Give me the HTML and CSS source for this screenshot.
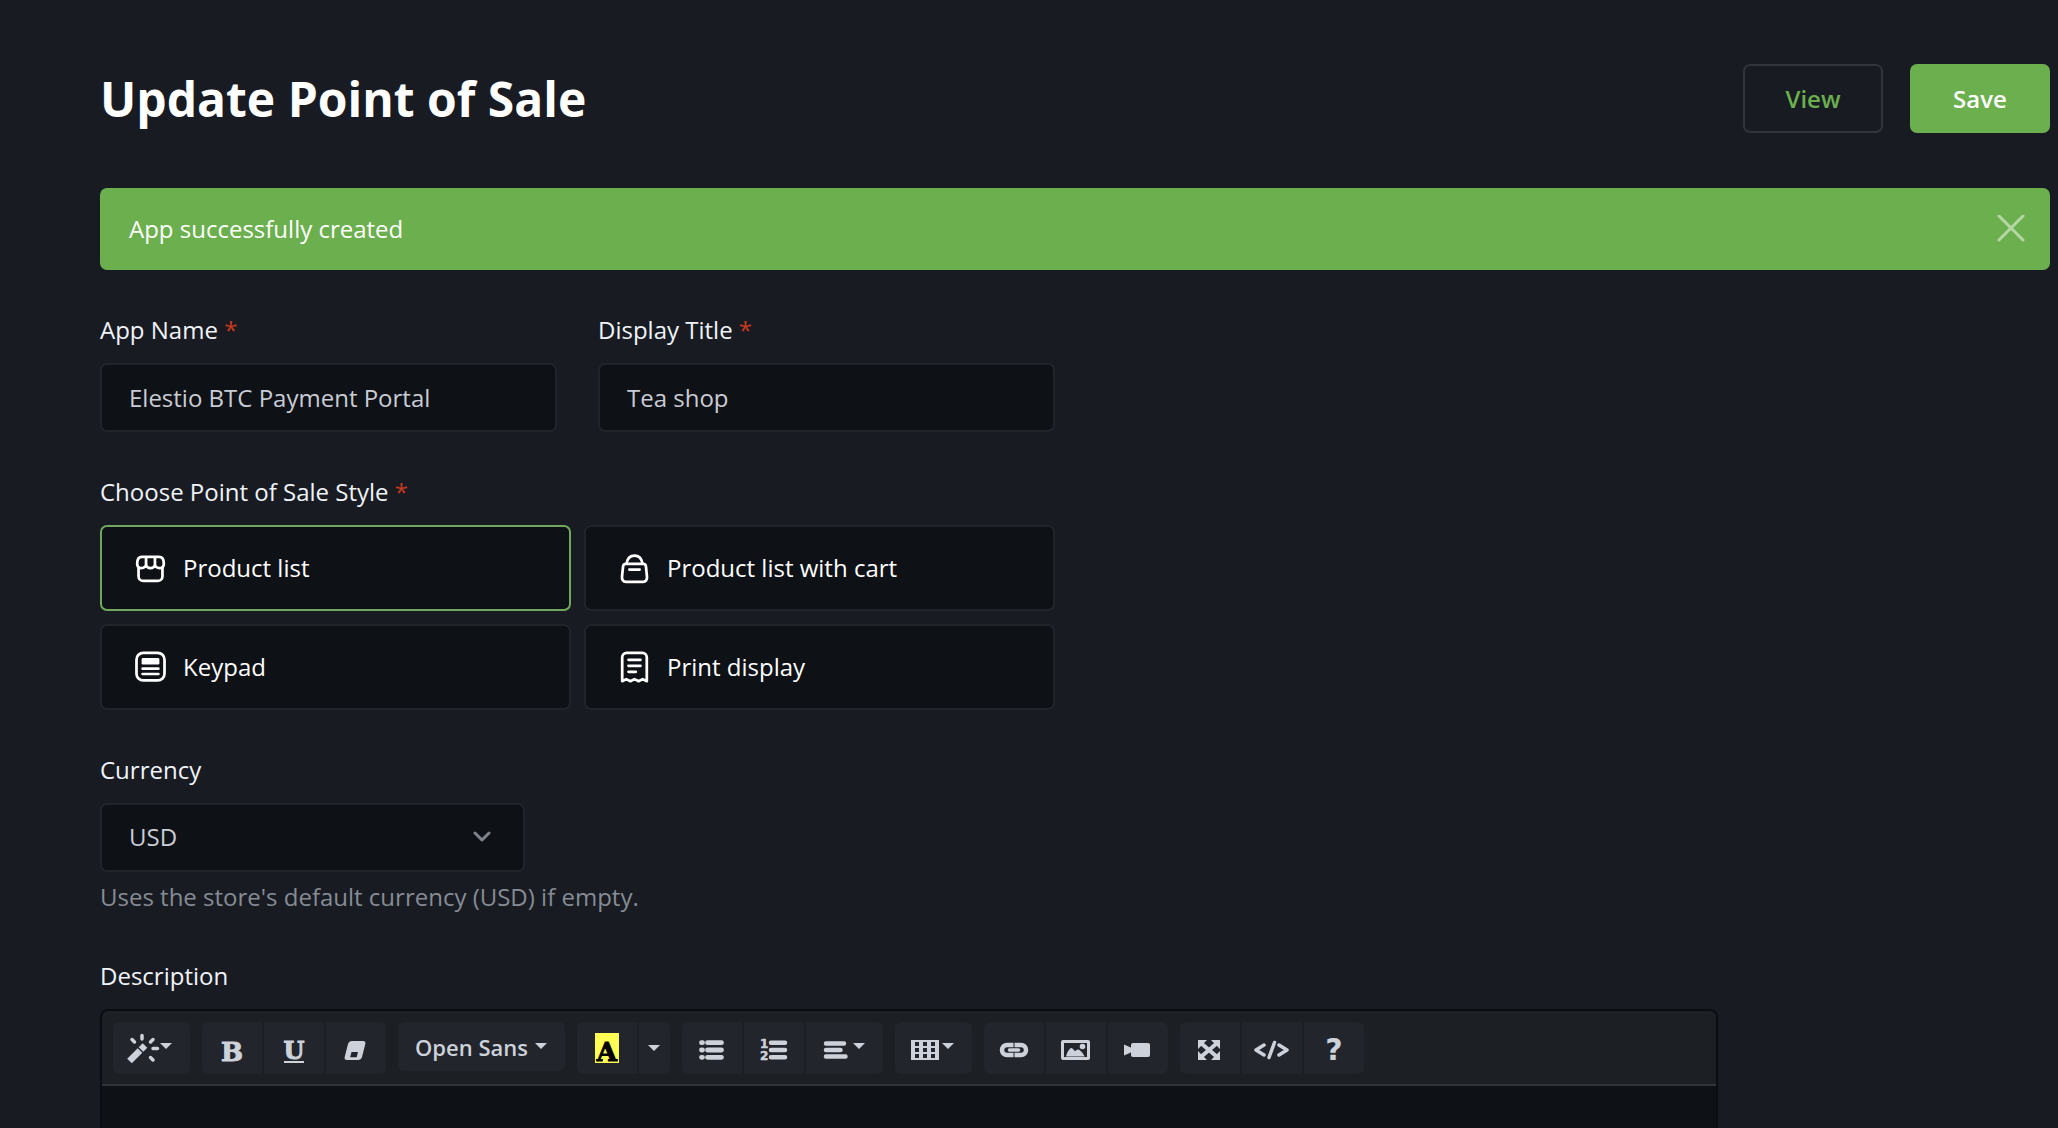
FILE: index.html
```html
<!DOCTYPE html>
<html lang="en">
<head>
    <meta charset="UTF-8">
    <meta name="viewport" content="width=device-width, initial-scale=1.0">
    <title>Update Point of Sale</title>
    <link rel="stylesheet" href="styles.css">
</head>
<body>
    <form class="page">
        <header class="page-header">
            <h1>Update Point of Sale</h1>
            <div class="actions">
                <button type="button" class="btn btn-secondary">View</button>
                <button type="submit" class="btn btn-primary">Save</button>
            </div>
        </header>

        <div class="alert" role="alert">
            <span>App successfully created</span>
            <button type="button" class="alert-close" aria-label="Close">
                <svg viewBox="0 0 28 28"><path d="M2 1l24 24M26 1L2 25"/></svg>
            </button>
        </div>

        <div class="settings">
            <div class="row">
                <div class="field">
                    <label for="app-name">App Name <span class="required">*</span></label>
                    <input type="text" id="app-name" class="control" value="Elestio BTC Payment Portal">
                </div>
                <div class="field">
                    <label for="title">Display Title <span class="required">*</span></label>
                    <input type="text" id="title" class="control" value="Tea shop">
                </div>
            </div>

            <fieldset>
                <legend>Choose Point of Sale Style <span class="required">*</span></legend>
                <div class="tiles">
                    <label class="tile">
                        <input type="radio" name="style" value="static" checked>
                        <svg viewBox="0 0 24 24">
                            <path d="M7 5.2h10c2 0 2.8 2 2.8 4 0 1.7-1 2.6-2.5 2.6s-2.7-1-2.7-2.4c0 1.4-1.1 2.4-2.6 2.4s-2.6-1-2.6-2.4c0 1.4-1.2 2.4-2.7 2.4s-2.5-.9-2.5-2.6c0-2 .8-4 2.8-4zM9.4 9.4V5.2M14.6 9.4V5.2"/>
                            <path d="M5 11.3v5.2a2.8 2.8 0 0 0 2.8 2.8h8.4a2.8 2.8 0 0 0 2.8-2.8v-5.2"/>
                        </svg>
                        <span>Product list</span>
                    </label>
                    <label class="tile">
                        <input type="radio" name="style" value="cart">
                        <svg viewBox="0 0 24 24">
                            <path d="M7 9.3h10c.9 0 1.6.6 1.7 1.5l.6 6c.2 1.7-.7 3-2.3 3H7c-1.6 0-2.5-1.3-2.3-3l.6-6c.1-.9.8-1.5 1.7-1.5z"/>
                            <path d="M7.3 9.2c.5-3 2.4-4.7 4.7-4.7s4.2 1.7 4.7 4.7M9 12.6h6"/>
                        </svg>
                        <span>Product list with cart</span>
                    </label>
                    <label class="tile">
                        <input type="radio" name="style" value="light">
                        <svg viewBox="0 0 24 24">
                            <rect x="3.8" y="3.4" width="16.4" height="16.2" rx="4"/>
                            <rect class="solid" x="6.8" y="6.5" width="10.4" height="3.8" rx=".8"/>
                            <path d="M7.4 12.7h9.2M7.4 15.8h9.2"/>
                        </svg>
                        <span>Keypad</span>
                    </label>
                    <label class="tile">
                        <input type="radio" name="style" value="print">
                        <svg viewBox="0 0 24 24">
                            <path d="M4.8 20V6a2.6 2.6 0 0 1 2.6-2.6h9.2A2.6 2.6 0 0 1 19.2 6v14l-2.4-1.2-2.4 1.2-2.4-1.2L9.600 20l-2.400-1.200z"/>
                            <path d="M8.5 7.5h7M8.5 11h7M8.5 14.5h4.3"/>
                        </svg>
                        <span>Print display</span>
                    </label>
                </div>
            </fieldset>

            <div class="field">
                <label for="currency">Currency</label>
                <div class="select">
                    <select id="currency" class="control">
                        <option>USD</option>
                        <option>EUR</option>
                        <option>BTC</option>
                    </select>
                    <svg viewBox="0 0 18 12"><path d="M2 2l7 7 7-7"/></svg>
                </div>
                <p class="help">Uses the store's default currency (USD) if empty.</p>
            </div>
        </div>

        <section class="description">
            <div class="label" id="description-label">Description</div>
            <div class="editor">
                <div class="toolbar">
                    <div class="group">
                        <button type="button" class="tool dropdown" aria-label="Style">
                            <svg viewBox="0 0 32 32">
                                <path d="M2.500 27L13 16.500" stroke-width="6.500" stroke-linecap="butt"/>
                                <path d="M14 15.500l4-4" stroke-width="6.500" stroke-linecap="butt"/>
                                <path d="M15 1.500v3.500M5 5.500l2.500 2.500M26 5.500l-2.500 2.500M26 14.500h4.500M23.500 23.500l2.500 2.500" stroke-width="3.500"/>
                            </svg>
                            <span class="caret"></span>
                        </button>
                    </div>
                    <div class="group">
                        <button type="button" class="tool letter" aria-label="Bold">B</button>
                        <button type="button" class="tool letter" aria-label="Underline"><span class="underline">U</span></button>
                        <button type="button" class="tool" aria-label="Remove font style">
                            <svg viewBox="0 0 32 32"><path class="solid" fill-rule="evenodd" d="M12 7h11q3 0 2.300 3l-3.300 13q-1 3-4 3H7q-3 0-2.300-3L8 10q1-3 4-3zM11.500 18l-1.300 5.300h6.500l1.300-5.300z"/></svg>
                        </button>
                    </div>
                    <div class="group">
                        <button type="button" class="tool font-name">Open Sans<span class="caret"></span></button>
                    </div>
                    <div class="group">
                        <button type="button" class="tool letter" aria-label="Recent color"><span class="highlight">A</span></button>
                        <button type="button" class="tool more" aria-label="More colors"><span class="caret"></span></button>
                    </div>
                    <div class="group">
                        <button type="button" class="tool" aria-label="Unordered list">
                            <svg viewBox="0 0 32 32">
                                <path d="M5.500 8.700h1M5.500 16h1M5.500 23.300h1M11.500 8.700h14M11.500 16h14M11.500 23.300h14" stroke-width="4.800"/>
                            </svg>
                        </button>
                        <button type="button" class="tool" aria-label="Ordered list">
                            <svg viewBox="0 0 32 32">
                                <path d="M13 8.700h14M13 16h14M13 23.300h14" stroke-width="4.500"/>
                                <text x="2" y="14">1</text>
                                <text x="2" y="26">2</text>
                            </svg>
                        </button>
                        <button type="button" class="tool dropdown" aria-label="Paragraph">
                            <svg viewBox="0 0 32 32"><path d="M6 9.500h18M6 16h14.500M6 22.500h19.500" stroke-width="4.500"/></svg>
                            <span class="caret"></span>
                        </button>
                    </div>
                    <div class="group">
                        <button type="button" class="tool dropdown" aria-label="Table">
                            <svg viewBox="0 0 32 32"><path class="solid" fill-rule="evenodd" d="M2 6h28v20H2zM6 8v4h4V8zM14 8v4h4V8zM22 8v4h4V8zM6 14v4h4v-4zM14 14v4h4v-4zM22 14v4h4v-4zM6 20v4h4v-4zM14 20v4h4v-4zM22 20v4h4v-4z"/></svg>
                            <span class="caret"></span>
                        </button>
                    </div>
                    <div class="group">
                        <button type="button" class="tool" aria-label="Link">
                            <svg viewBox="0 0 32 32">
                                <path d="M15.500 11H9a5 5 0 0 0 0 10h6.500M16.500 11H23a5 5 0 0 1 0 10h-6.500" stroke-width="4.500" stroke-linecap="butt"/>
                                <path d="M11.500 16h9" stroke-width="3.500"/>
                            </svg>
                        </button>
                        <button type="button" class="tool" aria-label="Picture">
                            <svg viewBox="0 0 32 32">
                                <rect x="2.500" y="7.500" width="26" height="17" rx=".5" stroke-width="3"/>
                                <circle class="solid" cx="22.500" cy="12.500" r="2.800"/>
                                <path class="solid" d="M6 22.500c1-4 3.500-8.500 5.500-8.500 1.500 0 2.500 3 3.500 3s1.500-1.500 3-1.500c2 0 5.500 4 6.500 7z"/>
                            </svg>
                        </button>
                        <button type="button" class="tool" aria-label="Video">
                            <svg viewBox="0 0 32 32">
                                <rect class="solid" x="9" y="9" width="19" height="14" rx="2"/>
                                <path class="solid" d="M2 10.500l8 3.500v4l-8 3.500z"/>
                            </svg>
                        </button>
                    </div>
                    <div class="group">
                        <button type="button" class="tool" aria-label="Full screen">
                            <svg viewBox="0 0 32 32">
                                <path d="M8 10l14 12M22 10L8 22" stroke-width="4" stroke-linecap="butt"/>
                                <path class="solid" d="M4 6h9l-2.500 2.500L6.500 12.500 4 15zM26 6h-9l6.500 6.500L26 15zM4 26v-9l6.500 6.500L13 26zM26 26v-9l-6.500 6.500L17 26z"/>
                            </svg>
                        </button>
                        <button type="button" class="tool" aria-label="Code view">
                            <svg viewBox="0 0 32 32"><path d="M8 11L0 16l8 5M23 11l8 5-8 5M18.500 8.500l-5.500 15" stroke-width="3.500"/></svg>
                        </button>
                        <button type="button" class="tool question" aria-label="Help">?</button>
                    </div>
                </div>
                <div class="editable" contenteditable="true" role="textbox" aria-labelledby="description-label"></div>
            </div>
        </section>
    </form>
</body>
</html>
```

FILE: styles.css
```css
* {
    box-sizing: border-box;
}

body {
    margin: 0;
    background-color: #181b22;
    color: #f0f3fa;
    font-family: "Open Sans", "Noto Sans", sans-serif;
    font-size: 24px;
    line-height: 36px;
}

button, input, select {
    font: inherit;
}

button {
    cursor: pointer;
}

svg {
    display: block;
    flex-shrink: 0;
    fill: none;
    stroke: currentColor;
    stroke-linecap: round;
    stroke-linejoin: round;
}

.solid {
    fill: currentColor;
    stroke: none;
}

.page {
    display: flex;
    flex-direction: column;
    height: 100vh;
    padding: 64px 8px 0 100px;
    overflow: hidden;
}

/* Header */
.page-header {
    display: flex;
    flex-shrink: 0;
    justify-content: space-between;
    align-items: center;
    margin-bottom: 55px;
}

h1 {
    margin: 0;
    color: #fff;
    font-size: 48px;
    font-weight: 700;
    line-height: 58px;
}

.actions {
    display: flex;
    gap: 27px;
}

.btn {
    min-width: 140px;
    height: 69px;
    padding: 0 40px;
    border: 2px solid #6baf4e;
    border-radius: 7px;
    font-weight: 600;
}

.btn-primary {
    background-color: #6baf4e;
    color: #fff;
}

.btn-secondary {
    background-color: transparent;
    border-color: #31343c;
    color: #6baf4e;
}

.alert {
    display: flex;
    flex-shrink: 0;
    justify-content: space-between;
    align-items: center;
    height: 82px;
    margin-bottom: 42px;
    padding: 0 25px 0 29px;
    border-radius: 7px;
    background-color: #6baf4e;
    color: #fff;
}

.alert-close {
    padding: 0;
    border: 0;
    background: none;
    color: #b5d7a6;
}

.alert-close svg {
    width: 28px;
    height: 28px;
    stroke-width: 3;
}

/* Form */
.settings {
    display: flex;
    flex-direction: column;
    flex-shrink: 0;
    gap: 42px;
    max-width: 955px;
    margin-bottom: 43px;
}

.row {
    display: grid;
    grid-template-columns: 1fr 1fr;
    gap: 41px;
}

.field label, legend, .label {
    display: block;
    margin-bottom: 15px;
    padding: 0;
}

.required {
    color: #c8391f;
}

.control {
    display: block;
    width: 100%;
    height: 69px;
    padding: 0 27px;
    border: 2px solid #21242a;
    border-radius: 7px;
    background-color: #0e1116;
    color: #c9ccd4;
    appearance: none;
}

fieldset {
    min-width: 0;
    margin: 0;
    padding: 0;
    border: 0;
}

.tiles {
    display: grid;
    grid-template-columns: 1fr 1fr;
    gap: 13px;
}

.tile {
    display: flex;
    align-items: center;
    gap: 12px;
    height: 86px;
    padding: 0 28px;
    border: 2px solid #21242a;
    border-radius: 7px;
    background-color: #0e1116;
    color: #fff;
    cursor: pointer;
}

.tile:has(input:checked) {
    border-color: #71a75a;
}

.tile input {
    position: absolute;
    opacity: 0;
}

.tile svg {
    width: 41px;
    height: 41px;
    stroke-width: 1.6;
}

.select {
    position: relative;
    max-width: 425px;
}

.select .control {
    padding-bottom: 2px;
}

.select svg {
    position: absolute;
    top: 28px;
    right: 34px;
    width: 18px;
    height: 12px;
    color: #7d828b;
    stroke-width: 3;
    pointer-events: none;
}

.help {
    margin: 7px 0 0;
    color: #868b94;
}

/* Rich text editor */
.description {
    display: flex;
    flex: 1;
    flex-direction: column;
    max-width: 1618px;
}

.editor {
    display: flex;
    flex: 1;
    flex-direction: column;
    border: 2px solid #0b0d13;
    border-bottom: 0;
    border-radius: 8px 8px 0 0;
    background-color: #0e1116;
}

.toolbar {
    display: flex;
    flex-wrap: wrap;
    align-items: flex-start;
    gap: 12px;
    padding: 11px 11px 10px;
    border-bottom: 2px solid #313439;
    border-radius: 6px 6px 0 0;
    background-color: #1c1f23;
}

.group {
    display: flex;
    gap: 2px;
}

.tool {
    display: flex;
    justify-content: center;
    align-items: center;
    width: 60px;
    height: 52px;
    padding: 4px 0 0;
    border: 0;
    background-color: #22252c;
    color: #ccd1da;
}

.tool:first-child {
    border-radius: 6px 0 0 6px;
}

.tool:last-child {
    border-radius: 0 6px 6px 0;
}

.tool:only-child {
    border-radius: 6px;
}

.tool svg {
    width: 32px;
    height: 32px;
    overflow: visible;
}

.tool text {
    fill: currentColor;
    stroke: currentColor;
    stroke-width: .5;
    font-family: "DejaVu Sans", sans-serif;
    font-size: 12px;
    font-weight: 700;
}

.caret {
    margin-bottom: 8px;
    border: 6px solid transparent;
    border-top-color: currentColor;
    border-bottom: 0;
}

.dropdown {
    gap: 1px;
    width: auto;
    padding: 4px 18px 0 14px;
}

.more {
    width: 31px;
}

.more .caret {
    margin-bottom: 4px;
}

.font-name {
    gap: 7px;
    width: auto;
    height: 49px;
    padding: 0 18px 0 17px;
    font-size: 22px;
    font-weight: 600;
}

.font-name .caret {
    margin-bottom: 2px;
}

.letter {
    padding-top: 8px;
    font-family: "DejaVu Serif", serif;
    font-size: 26px;
    font-weight: 700;
    -webkit-text-stroke: 1px currentColor;
}

.underline {
    border-bottom: 2px solid currentColor;
    font-size: 24px;
    line-height: 20px;
}

.highlight {
    width: 24px;
    height: 30px;
    margin-bottom: 8px;
    background-color: #fffe54;
    color: #000;
    line-height: 38px;
}

.question {
    font-family: "DejaVu Sans", sans-serif;
    font-size: 30px;
    font-weight: 700;
}

.editable {
    flex: 1;
    outline: 0;
}
```
